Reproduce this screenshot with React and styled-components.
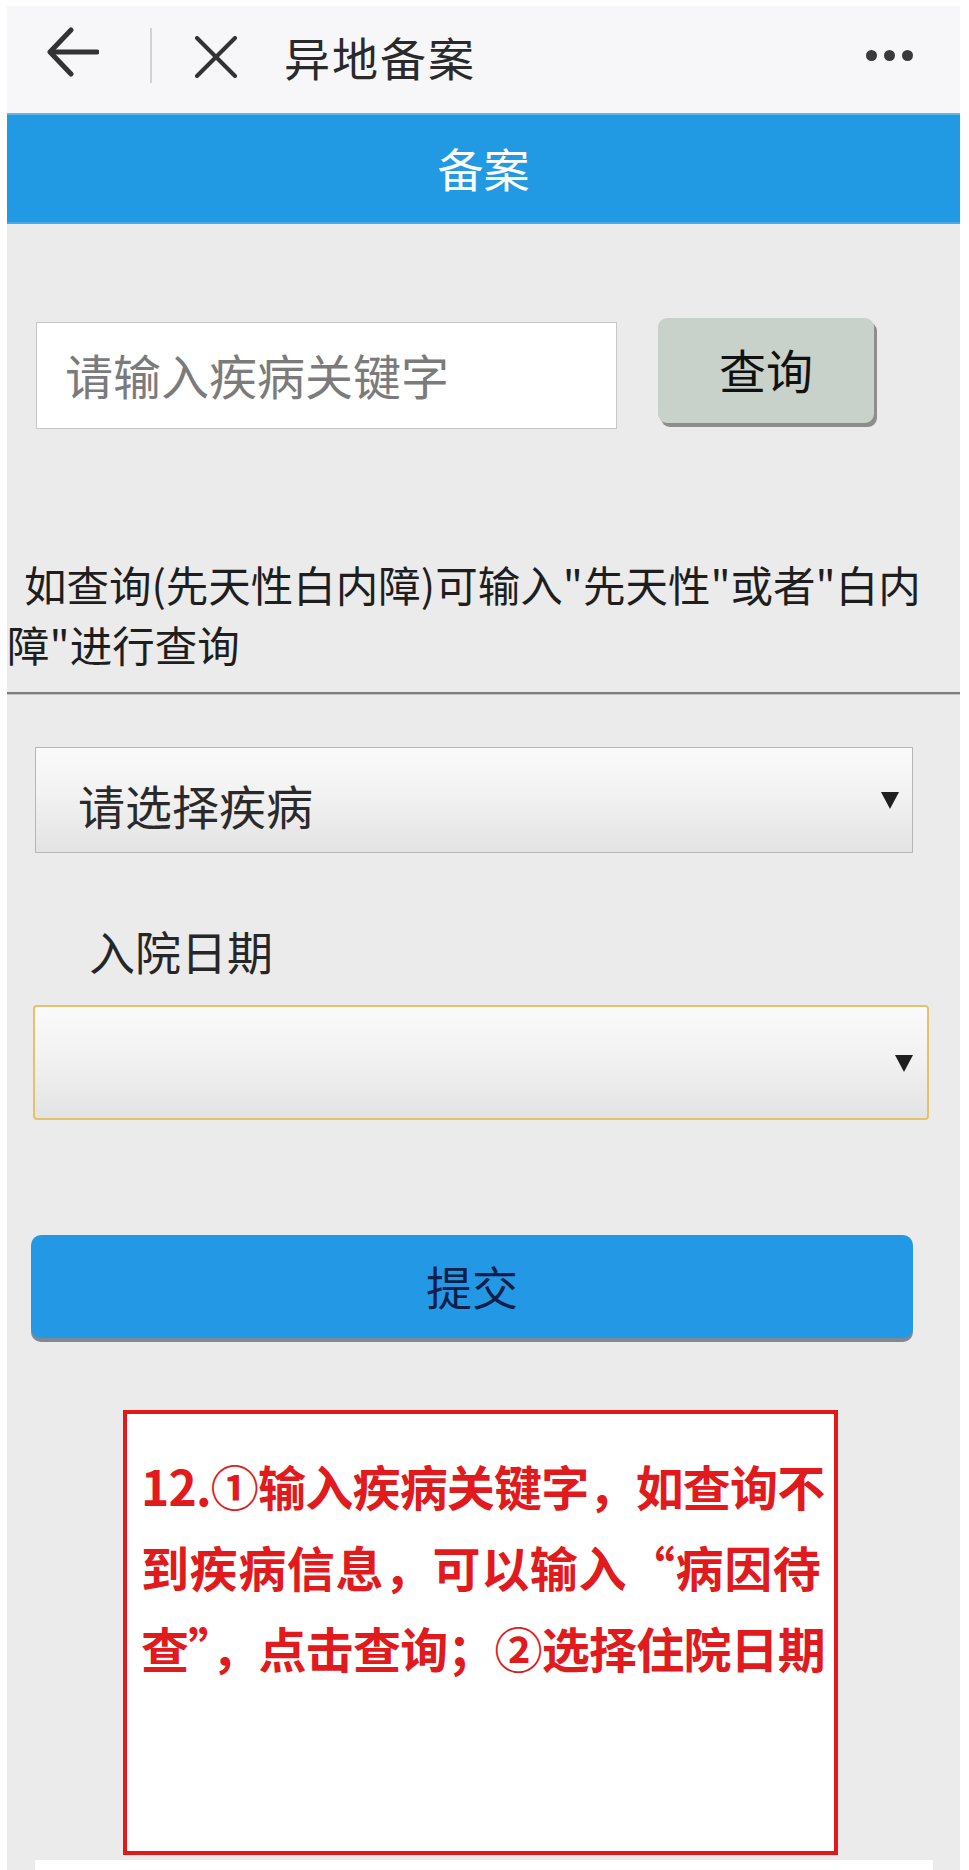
import React from "react"
import styled, { createGlobalStyle } from "styled-components"

const GlobalStyle = createGlobalStyle`
    html, body {
        margin: 0;
        padding: 0;
        background: #fff;
    }
    body {
        font-family: "Noto Sans CJK SC", "Noto Sans", sans-serif;
    }
`

const Page = styled.div`
    width: 969px;
    height: 1870px;
    overflow: hidden;
    background: #fff;
    padding-top: 6px;
    box-sizing: border-box;
`

const Screen = styled.div`
    margin-left: 7px;
    width: 953px;
    height: 1864px;
    background: #ebebeb;
    display: flex;
    flex-direction: column;
`

const TopBar = styled.header`
    height: 107px;
    background: #f7f6f9;
    display: flex;
    align-items: center;
    padding: 0 47px 8px 40px;
    box-sizing: border-box;
    color: #2b2b2b;
`

const IconButton = styled.span`
    display: flex;
    align-items: center;
    margin-top: ${(p) => p.$lift || 0}px;
`

const Separator = styled.span`
    width: 2px;
    height: 55px;
    background: #d2d2d4;
    margin: 0 42px 0 51px;
`

const PageTitle = styled.h1`
    margin: 0 0 0 46px;
    font-size: 46px;
    font-weight: 400;
    letter-spacing: 2px;
    line-height: 1;
    color: #2a2a2a;
`

const More = styled.span`
    margin-left: auto;
    display: flex;
    gap: 7px;
`

const Dot = styled.i`
    width: 11px;
    height: 11px;
    border-radius: 50%;
    background: #3a3a3c;
`

const Header = styled.div`
    height: 111px;
    background: #2299e3;
    border-top: 2px solid #5db6ee;
    border-bottom: 2px solid #44a9ea;
    box-sizing: border-box;
    display: flex;
    align-items: center;
    justify-content: center;
    color: #fff;
    font-size: 46px;
    padding-bottom: 4px;
`

const Body = styled.main`
    display: flex;
    flex-direction: column;
    flex: 1;
`

const SearchRow = styled.div`
    display: flex;
    align-items: flex-start;
    margin: 94px 0 0 29px;
`

const SearchInput = styled.input`
    width: 581px;
    height: 107px;
    margin-top: 4px;
    box-sizing: border-box;
    border: 1px solid #c6c6c6;
    background: #fff;
    padding: 0 0 4px 28px;
    font-family: inherit;
    font-size: 48px;
    color: #333;
    outline: none;
    &::placeholder {
        color: #7b7b7b;
    }
`

const QueryButton = styled.button`
    width: 216px;
    height: 105px;
    margin-left: 41px;
    border: none;
    border-radius: 9px;
    background: #c8d2ca;
    box-shadow: 3px 4px 0 #8d8d8d;
    font-family: inherit;
    font-size: 47px;
    color: #111;
    padding: 0 0 4px;
`

const Hint = styled.p`
    margin: 125px 0 0;
    font-size: 42.5px;
    line-height: 60px;
    text-indent: 17px;
    color: #1e1e1e;
`

const Divider = styled.hr`
    margin: 18px 0 0;
    border: none;
    height: 2px;
    background: #7d7d7d;
    box-shadow: 0 1px 0 #c4c4c4;
`

const Select = styled.div`
    display: flex;
    align-items: center;
    justify-content: space-between;
    box-sizing: border-box;
    width: ${(p) => p.$width}px;
    height: ${(p) => p.$height}px;
    margin: ${(p) => p.$top}px 0 0 ${(p) => p.$left}px;
    padding: 8px ${(p) => p.$right}px 0 42px;
    border: ${(p) => (p.$focus ? "2px solid #e5c168" : "1px solid #b6b6b6")};
    border-radius: ${(p) => (p.$focus ? 4 : 0)}px;
    background: linear-gradient(#fafafa 0%, #f2f2f2 45%, #e3e3e4 100%);
    font-size: 47px;
    color: #2a2a2a;
`

const Caret = styled.span`
    width: 0;
    height: 0;
    border-left: 9px solid transparent;
    border-right: 9px solid transparent;
    border-top: 17px solid #1f1f1f;
    margin-left: auto;
    margin-top: ${(p) => p.$shift || 0}px;
`

const Label = styled.div`
    margin: 67px 0 0 82px;
    font-size: 46px;
    line-height: 60px;
    color: #262626;
`

const SubmitButton = styled.button`
    width: 882px;
    height: 103px;
    margin: 115px 0 0 24px;
    border: none;
    border-radius: 10px;
    background: #2398e4;
    box-shadow: 0 4px 0 #7d8994;
    font-family: inherit;
    font-size: 46px;
    color: #0c1f4a;
    padding: 0 0 4px;
`

const Notice = styled.div`
    width: 715px;
    height: 445px;
    margin: 72px 0 0 116px;
    box-sizing: border-box;
    border: 4px solid #e2191b;
    background: #fff;
    padding: 31px 0 0 14px;
    color: #e01a1d;
    font-size: 48px;
    font-weight: 700;
    line-height: 81px;
    white-space: nowrap;
`

const NoticeLine = styled.div`
    letter-spacing: ${(p) => p.$spacing}px;
`

const NextCard = styled.div`
    margin: 5px 0 0 28px;
    width: 898px;
    flex: 1;
    background: #fff;
`

function BackIcon() {
    return (
        <svg width="52" height="50" viewBox="0 0 52 50" fill="none" stroke="#333" strokeWidth="5" strokeLinecap="round" strokeLinejoin="round">
            <path d="M50 25H4" />
            <path d="M24 3L3 25l21 22" />
        </svg>
    )
}

function CloseIcon() {
    return (
        <svg width="44" height="42" viewBox="0 0 44 42" fill="none" stroke="#333" strokeWidth="4" strokeLinecap="round">
            <path d="M3 2l38 38" />
            <path d="M41 2L3 40" />
        </svg>
    )
}

export default function App() {
    return (
        <Page>
            <GlobalStyle />
            <Screen>
                <TopBar>
                    <IconButton $lift={-8}>
                        <BackIcon />
                    </IconButton>
                    <Separator />
                    <IconButton $lift={2}>
                        <CloseIcon />
                    </IconButton>
                    <PageTitle>异地备案</PageTitle>
                    <More>
                        <Dot />
                        <Dot />
                        <Dot />
                    </More>
                </TopBar>
                <Header>备案</Header>
                <Body>
                    <SearchRow>
                        <SearchInput placeholder="请输入疾病关键字" />
                        <QueryButton>查询</QueryButton>
                    </SearchRow>
                    <Hint>
                        如查询(先天性白内障)可输入"先天性"或者"白内
                        <br />
                        障"进行查询
                    </Hint>
                    <Divider />
                    <Select $width={878} $height={106} $top={53} $left={28} $right={13}>
                        请选择疾病
                        <Caret $shift={-8} />
                    </Select>
                    <Label>入院日期</Label>
                    <Select $focus $width={896} $height={115} $top={25} $left={26} $right={14}>
                        <Caret $shift={-6} />
                    </Select>
                    <SubmitButton>提交</SubmitButton>
                    <Notice>
                        <NoticeLine $spacing={-0.8}>12.①输入疾病关键字，如查询不</NoticeLine>
                        <NoticeLine $spacing={0.6}>到疾病信息，可以输入“病因待</NoticeLine>
                        <NoticeLine $spacing={-0.8}>查”，点击查询；②选择住院日期</NoticeLine>
                    </Notice>
                    <NextCard />
                </Body>
            </Screen>
        </Page>
    )
}
